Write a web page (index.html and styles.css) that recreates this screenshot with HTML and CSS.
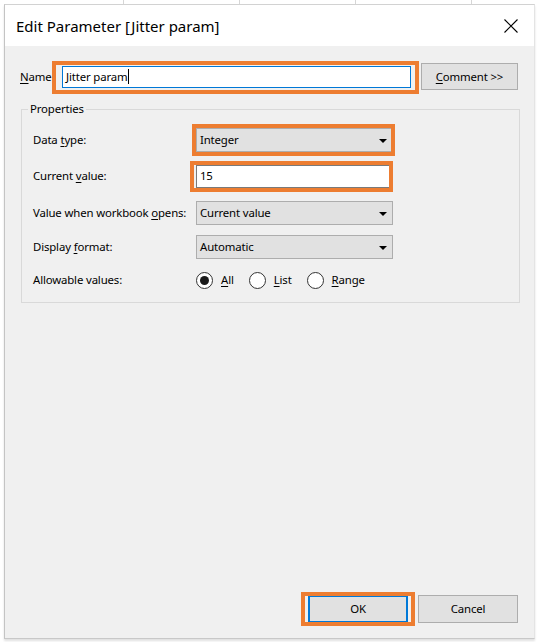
FILE: index.html
```html
<!DOCTYPE html>
<html>
<head>
<meta charset="utf-8">
<link rel="stylesheet" href="styles.css">
</head>
<body>
<div class="backdrop">
  <span class="tick"></span><span class="tick"></span><span class="tick"></span><span class="tick"></span>
</div>
<div class="dialog">
  <div class="titlebar">
    <span class="title">Edit Parameter [Jitter param]</span>
    <svg class="close" width="14" height="14" viewBox="0 0 14 14"><path d="M0.5 0.5 L13.5 13.5 M13.5 0.5 L0.5 13.5" stroke="#000" stroke-width="1.1" fill="none"/></svg>
  </div>
  <div class="body">
    <div class="name-row">
      <label class="name-label"><u>N</u>ame</label>
      <div class="field name-field hl hl-name"><span>Jitter param</span><span class="caret"></span></div>
      <div class="btn comment"><u>C</u>omment &gt;&gt;</div>
    </div>
    <fieldset class="group">
      <legend>Properties</legend>
      <div class="row">
        <span class="lbl">Data <u>t</u>ype:</span>
        <div class="combo hl hl-type"><span>Integer</span><span class="arrow"></span></div>
      </div>
      <div class="row row-2">
        <span class="lbl">Current <u>v</u>alue:</span>
        <div class="field value-field hl hl-value">15</div>
      </div>
      <div class="row row-3">
        <span class="lbl">Value when workbook <u>o</u>pens:</span>
        <div class="combo"><span>Current value</span><span class="arrow"></span></div>
      </div>
      <div class="row row-4">
        <span class="lbl">Display <u>f</u>ormat:</span>
        <div class="combo"><span>Automatic</span><span class="arrow"></span></div>
      </div>
      <div class="row row-5 radio-row">
        <span class="lbl">Allowable values:</span>
        <div class="radios">
          <span class="radio-item"><span class="radio checked"></span><u>A</u>ll</span>
          <span class="radio-item"><span class="radio"></span><u>L</u>ist</span>
          <span class="radio-item"><span class="radio"></span><u>R</u>ange</span>
        </div>
      </div>
    </fieldset>
    <div class="footer">
      <span class="hl hl-ok"><span class="btn ok">OK</span></span>
      <span class="btn cancel">Cancel</span>
    </div>
  </div>
</div>
</body>
</html>
```
FILE: styles.css
```css
html, body {
  margin: 0;
  padding: 0;
  background: #ffffff;
}
body {
  width: 538px;
  height: 642px;
  overflow: hidden;
  font-family: "Noto Sans", "Open Sans", sans-serif;
  font-size: 11.4px;
  letter-spacing: -0.15px;
  color: #000;
}
u { text-decoration: underline; text-underline-offset: 2px; }

.backdrop {
  height: 4px;
  display: flex;
  padding-left: 8px;
}
.tick {
  width: 115px;
  height: 4px;
  border-right: 1px solid #d6d6d6;
}

.dialog {
  margin-left: 4px;
  width: 529px;
  height: 633px;
  border-left: 1px solid #c4c4c4;
  border-top: 1px solid #d2d2d2;
  border-right: 1px solid #e4e4e4;
  border-bottom: 1px solid #c8c8c8;
  box-shadow: 0 2px 2px rgba(0,0,0,0.12);
  display: flex;
  flex-direction: column;
}

.titlebar {
  height: 41px;
  background: #ffffff;
  display: flex;
  align-items: center;
  justify-content: space-between;
  padding-left: 11px;
  padding-right: 16px;
}
.title {
  font-size: 15px;
  line-height: 20px;
  letter-spacing: 0;
  color: #000;
}
.close { display: block; margin-top: 1px; }

.body {
  flex: 1;
  background: #f0f0f0;
  padding: 0 16px 15px 15px;
  display: flex;
  flex-direction: column;
}

.name-row {
  margin-top: 17px;
  height: 27px;
  display: flex;
  align-items: center;
}
.name-label {
  width: 42px;
  line-height: 16px;
}
.field {
  box-sizing: border-box;
  background: #fff;
  border: 1px solid #7a7a7a;
  display: flex;
  align-items: center;
  padding-left: 3px;
  line-height: 16px;
}
.name-field {
  width: 349px;
  height: 22px;
  border-color: #0078d7;
}
.caret {
  display: inline-block;
  width: 1px;
  height: 15px;
  background: #000;
  margin-left: 1px;
}
.btn {
  box-sizing: border-box;
  background: #e1e1e1;
  border: 1px solid #adadad;
  display: flex;
  align-items: center;
  justify-content: center;
  line-height: 16px;
}
.comment {
  margin-left: 10px;
  width: 97px;
  height: 27px;
}

.group {
  margin: 11px -2px 0 1px;
  border: 1px solid #d9d9d9;
  padding: 11px 0 11px 11px;
  min-width: 0;
}
.group legend {
  line-height: 16px;
  padding: 0 2px;
  margin-left: -5px;
}

.row {
  display: grid;
  grid-template-columns: 163px 197px;
  height: 24px;
  align-items: center;
}
.row-2 { margin-top: 12px; }
.row-3 { margin-top: 13px; }
.row-4 { margin-top: 10px; }
.row-5 { margin-top: 10px; height: 22px; }
.lbl { line-height: 16px; white-space: nowrap; }

.combo {
  box-sizing: border-box;
  height: 24px;
  width: 197px;
  background: #e1e1e1;
  border: 1px solid #adadad;
  display: flex;
  align-items: center;
  justify-content: space-between;
  padding: 0 5px 0 3px;
  line-height: 16px;
}
.arrow {
  width: 0;
  height: 0;
  border-left: 4px solid transparent;
  border-right: 4px solid transparent;
  border-top: 4px solid #000;
  margin-top: 1px;
}
.value-field {
  width: 195px;
  height: 23px;
}

.radios {
  display: flex;
  align-items: center;
  gap: 15px;
  white-space: nowrap;
}
.radio-item {
  display: flex;
  align-items: center;
  line-height: 16px;
}
.radio {
  box-sizing: border-box;
  width: 17px;
  height: 17px;
  border: 1px solid #333;
  border-radius: 50%;
  background: #fff;
  margin-right: 8px;
  display: flex;
  align-items: center;
  justify-content: center;
}
.radio.checked::before {
  content: "";
  width: 9px;
  height: 9px;
  border-radius: 50%;
  background: #1a1a1a;
}

.footer {
  margin-top: auto;
  display: flex;
  justify-content: flex-end;
  gap: 10px;
}
.ok, .cancel {
  width: 100px;
  height: 28px;
}
.ok {
  border-color: #0078d7;
  box-shadow: inset 0 0 0 1px #0078d7;
}

.hl { position: relative; }
.hl::after {
  content: "";
  position: absolute;
  border: 4px solid #ed7d31;
  pointer-events: none;
}
.hl-name::after { top: -6px; left: -11px; right: -9px; bottom: -7px; }
.hl-type::after { top: -5px; left: -5px; right: -3px; bottom: -5px; }
.hl-value::after { top: -5px; left: -7px; right: -3px; bottom: -5px; }
.hl-ok { display: block; }
.hl-ok::after { top: -3px; left: -7px; right: -7px; bottom: -3px; }
```
